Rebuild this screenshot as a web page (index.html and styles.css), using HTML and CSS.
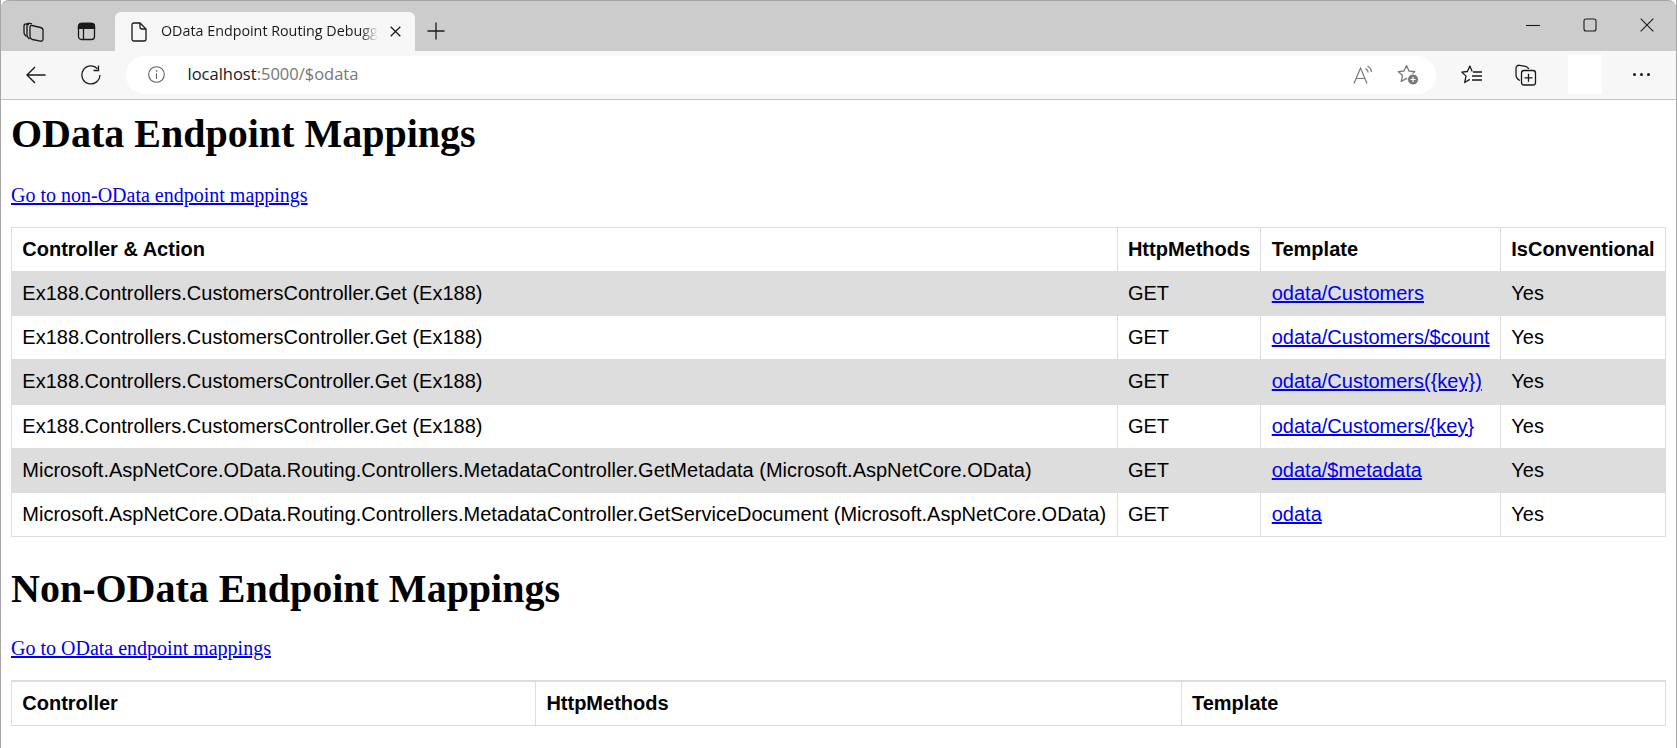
FILE: index.html
```html
<!DOCTYPE html>
<html lang="en">
<head>
  <meta charset="UTF-8">
  <title>OData Endpoint Routing Debug Page</title>
  <link rel="stylesheet" href="styles.css">
</head>
<body>
<div class="window">
  <!-- browser chrome -->
  <div class="tabstrip">
    <span class="tool first">
      <svg width="21" height="21" viewBox="0 0 21 21" fill="none" stroke="#1a1a1a" stroke-width="1.300"><path d="M3.500 15.500L2.300 14.300C1.500 13.500 1 12.700 1 11.500V5C1 3.500 2 2.800 3.500 3L6 3.500"/><path d="M6.500 18L5.300 16.800C4.500 16 4 15.200 4 14V4.500C4 3 5 2 6.500 2.300L9 2.800"/><path d="M9 4.500l8.500 2c1.500.4 2.500 1.500 2.500 3v8.500c0 1.500-1.200 2.500-2.700 2.200L9.500 18.500C8 18.100 7 17 7 15.500V6.300C7 5 7.800 4.200 9 4.500z"/></svg>
    </span>
    <span class="tool">
      <svg width="19" height="19" viewBox="0 0 19 19" fill="none" stroke="#1a1a1a" stroke-width="1.300"><rect x="1.500" y="1.500" width="16" height="16" rx="3"/><path d="M6.500 6v11.500"/><path d="M1.500 4.500c0-2 1-3 3-3h10c2 0 3 1 3 3v1.800h-16z" fill="#1a1a1a"/></svg>
    </span>
    <div class="tab">
      <svg class="tab-doc" width="16" height="20" viewBox="0 0 16 20" fill="none" stroke="#1a1a1a" stroke-width="1.300"><path d="M3 1h6l6 6v10c0 1.200-.8 2-2 2H3c-1.200 0-2-.8-2-2V3c0-1.200.8-2 2-2z"/><path d="M9 1v4c0 1.200.8 2 2 2h4"/></svg>
      <span class="tab-title">OData Endpoint Routing Debugg</span>
      <svg class="tab-close" width="11" height="11" viewBox="0 0 11 11" stroke="#1a1a1a" stroke-width="1.300"><path d="M.7.700l9.600 9.600M10.300.700L.7 10.300"/></svg>
    </div>
    <span class="newtab">
      <svg width="18" height="18" viewBox="0 0 18 18" stroke="#1a1a1a" stroke-width="1.300"><path d="M9 .5v17M.5 9h17"/></svg>
    </span>
    <div class="winctl">
      <svg width="14" height="14" viewBox="0 0 14 14" stroke="#1a1a1a" stroke-width="1.100"><path d="M0 7.500h14"/></svg>
      <svg width="14" height="14" viewBox="0 0 14 14" fill="none" stroke="#1a1a1a" stroke-width="1.100"><rect x="1" y="1" width="12" height="12" rx="2"/></svg>
      <svg width="14" height="14" viewBox="0 0 14 14" stroke="#1a1a1a" stroke-width="1.100"><path d="M.7.700l12.600 12.600M13.300.700L.7 13.300"/></svg>
    </div>
  </div>
  <div class="toolbar">
    <svg class="nav-back" width="20" height="18" viewBox="0 0 20 18" fill="none" stroke="#1a1a1a" stroke-width="1.400"><path d="M19.500 9H1M9 1L1 9l8 8"/></svg>
    <svg class="nav-reload" width="20" height="20" viewBox="0 0 20 20" fill="none" stroke="#1a1a1a" stroke-width="1.300"><path d="M16.500 3.800a9 9 0 1 0 2.400 6.200"/><path d="M17.500 .5v5h-5"/></svg>
    <div class="address">
      <svg class="info" width="17" height="17" viewBox="0 0 17 17" fill="none" stroke="#5f5f5f" stroke-width="1.100"><circle cx="8.500" cy="8.500" r="7.800"/><path d="M8.500 7.500v5.500"/><path d="M8.500 4.200v1.500" stroke-width="1.400"/></svg>
      <span class="url"><span class="url-host">localhost</span>:5000/$odata</span>
      <svg class="addr-read" width="20" height="20" viewBox="0 0 20 20" fill="none" stroke="#7a7a7a" stroke-width="1.200"><path d="M1 18.500L7.500 3l6.500 15.500M3.200 13.500h8.600"/><path d="M12.500 3.500c1.500.8 2.500 2.300 2.700 4M14.500 1c2.300 1.200 3.700 3.500 4 6"/></svg>
      <svg class="addr-fav" width="22" height="21" viewBox="0 0 22 21" fill="none" stroke="#7a7a7a" stroke-width="1.300"><path d="M9.500 1.500L12 7l5.800.6-4.300 4 1.300 5.800-5.300-3-5.300 3 1.300-5.800-4.300-4L7 7z" stroke-linejoin="round"/><circle cx="16" cy="15.500" r="5.500" fill="#7a7a7a" stroke="#fff" stroke-width="1"/><path d="M13.500 15.500h5M16 13v5" stroke="#fff" stroke-width="1.200"/></svg>
    </div>
    <svg class="tool-faves" width="22" height="20" viewBox="0 0 22 20" fill="none" stroke="#1a1a1a" stroke-width="1.300"><path d="M11.200 6.500L8.800 1 6.400 6.500.8 7.100l4.200 4-1.300 6.400 5.100-3.100" stroke-linejoin="round"/><path d="M12 7h9M11 11h10M11 15h10"/></svg>
    <svg class="tool-coll" width="22" height="22" viewBox="0 0 22 22" fill="none" stroke="#1a1a1a" stroke-width="1.300"><path d="M5 16.500C3 15.500 1 13.500 1 11V4.500C1 2.500 2.500 1 4.500 1.300l6 1c1.500.3 2.700 1.200 3.200 2.700"/><rect x="6.500" y="6.500" width="14" height="14.500" rx="2.500"/><path d="M13.500 9.800v8M9.500 13.800h8"/></svg>
    <div class="blank"></div>
    <div class="dots"><i></i><i></i><i></i></div>
  </div>

  <!-- page content -->
  <main class="page">
    <h1 class="heading-first">OData Endpoint Mappings</h1>
    <p class="jump"><a href="#non-odata">Go to non-OData endpoint mappings</a></p>
    <table class="routes">
      <tr><th>Controller &amp; Action</th><th>HttpMethods</th><th>Template</th><th>IsConventional</th></tr>
      <tr><td>Ex188.Controllers.CustomersController.Get (Ex188)</td><td>GET</td><td><a href="#">odata/Customers</a></td><td>Yes</td></tr>
      <tr><td>Ex188.Controllers.CustomersController.Get (Ex188)</td><td>GET</td><td><a href="#">odata/Customers/$count</a></td><td>Yes</td></tr>
      <tr><td>Ex188.Controllers.CustomersController.Get (Ex188)</td><td>GET</td><td><a href="#">odata/Customers({key})</a></td><td>Yes</td></tr>
      <tr><td>Ex188.Controllers.CustomersController.Get (Ex188)</td><td>GET</td><td><a href="#">odata/Customers/{key}</a></td><td>Yes</td></tr>
      <tr><td>Microsoft.AspNetCore.OData.Routing.Controllers.MetadataController.GetMetadata (Microsoft.AspNetCore.OData)</td><td>GET</td><td><a href="#">odata/$metadata</a></td><td>Yes</td></tr>
      <tr><td>Microsoft.AspNetCore.OData.Routing.Controllers.MetadataController.GetServiceDocument (Microsoft.AspNetCore.OData)</td><td>GET</td><td><a href="#">odata</a></td><td>Yes</td></tr>
    </table>
    <h1 class="heading-next" id="non-odata">Non-OData Endpoint Mappings</h1>
    <p class="jump"><a href="#">Go to OData endpoint mappings</a></p>
    <table class="routes routes-other">
      <tr><th class="col-ctrl">Controller</th><th class="col-http">HttpMethods</th><th>Template</th></tr>
    </table>
  </main>
</div>
</body>
</html>
```

FILE: styles.css
```css
html, body {
  margin: 0;
  height: 100%;
  overflow: hidden;
  background: #fff;
}

.window {
  height: 100%;
  box-sizing: border-box;
  display: flex;
  flex-direction: column;
  border-left: 1px solid #a6a6a6;
  border-right: 1px solid #a6a6a6;
}

/* tab strip */
.tabstrip {
  height: 51px;
  flex: none;
  box-sizing: border-box;
  display: flex;
  align-items: flex-end;
  background: #cccccc;
  border-top: 1px solid #a6a6a6;
  border-radius: 8px 8px 0 0;
}

.tool {
  width: 53px;
  height: 39px;
  display: flex;
  align-items: center;
  justify-content: center;
}

.tool.first {
  margin-left: 5.500px;
}

.tab {
  width: 300px;
  height: 39px;
  margin-left: 2.500px;
  padding-left: 16px;
  box-sizing: border-box;
  display: flex;
  align-items: center;
  background: #f7f7f7;
  border-radius: 6px 6px 0 0;
}

.tab-title {
  margin-left: 14px;
  margin-bottom: 2px;
  white-space: nowrap;
  font: 14.300px "Open Sans", sans-serif;
  color: #1a1a1a;
  -webkit-mask-image: linear-gradient(to right, #000 92%, transparent);
  mask-image: linear-gradient(to right, #000 92%, transparent);
}

.tab-close {
  margin-left: auto;
  margin-right: 14.500px;
}

.newtab {
  height: 39px;
  margin-left: 12px;
  padding-bottom: 2px;
  box-sizing: border-box;
  display: flex;
  align-items: center;
}

.winctl {
  margin-left: auto;
  margin-right: 22px;
  align-self: flex-start;
  margin-top: 17px;
  display: flex;
  gap: 43px;
}

/* address bar row */
.toolbar {
  height: 49px;
  flex: none;
  padding-bottom: 1px;
  box-sizing: border-box;
  display: flex;
  align-items: center;
  background: #f7f7f7;
  border-bottom: 1px solid #c4c4c4;
}

.nav-back {
  margin-left: 25px;
}

.nav-reload {
  margin-left: 35px;
}

.address {
  width: 1310px;
  height: 38px;
  margin-left: 25px;
  display: flex;
  align-items: center;
  background: #fff;
  border-radius: 19px;
}

.info {
  margin-left: 21.500px;
}

.url {
  margin-left: 23px;
  margin-bottom: 2px;
  font: 16.500px "Open Sans", sans-serif;
  color: #767676;
}

.url-host {
  color: #1a1a1a;
}

.addr-read {
  margin-left: auto;
}

.addr-fav {
  margin-left: 24px;
  margin-right: 17px;
}

.tool-faves {
  margin-left: 25px;
}

.tool-coll {
  margin-left: 32px;
}

.blank {
  width: 34px;
  height: 39px;
  margin-left: 31px;
  background: #fff;
}

.dots {
  margin-left: 30.500px;
  display: flex;
  gap: 4px;
}

.dots i {
  width: 3px;
  height: 3px;
  border-radius: 50%;
  background: #1a1a1a;
}

/* page */
.page {
  padding: 0 10px;
  font: 20px "Liberation Serif", serif;
  color: #000;
}

h1 {
  font-size: 40px;
  line-height: 46px;
  font-weight: bold;
}

.heading-first {
  margin: 11px 0 27px;
}

.heading-next {
  margin: 28.500px 0 25.500px;
}

.jump {
  margin: 0 0 19.500px;
  line-height: 23px;
}

a {
  color: #0000ee;
}

.routes {
  width: 100%;
  border-collapse: collapse;
  font: 20px "Liberation Sans", sans-serif;
}

.routes th, .routes td {
  padding: 10.150px 10.300px;
  border: 1px solid #dddddd;
  text-align: left;
  white-space: nowrap;
}

.routes tr:nth-child(even) td {
  background: #dddddd;
}

.routes-other th {
  border-top-width: 2px;
}

.routes-other .col-ctrl {
  width: 502.500px;
}

.routes-other .col-http {
  width: 624px;
}
```
